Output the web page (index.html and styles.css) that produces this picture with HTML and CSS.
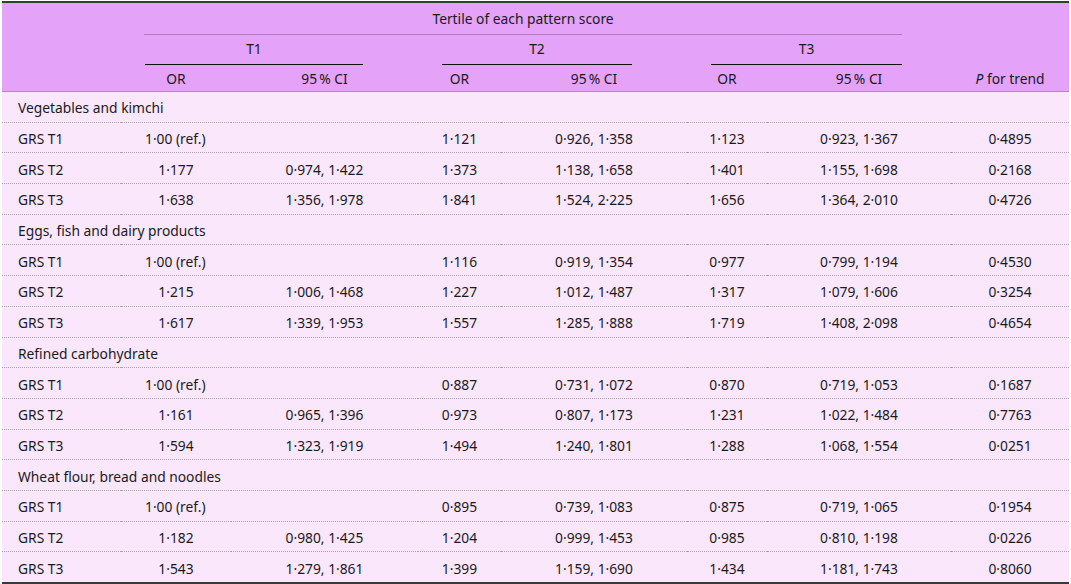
FILE: index.html
```html
<!DOCTYPE html>
<html lang="en">
<head>
<meta charset="utf-8">
<title>Tertile of each pattern score</title>
<link rel="stylesheet" href="styles.css">
</head>
<body>
<table class="grid">
  <colgroup>
    <col class="c-label"><col class="c-or1"><col class="c-ci1"><col class="c-or2"><col class="c-ci2"><col class="c-or3"><col class="c-ci3"><col class="c-p">
  </colgroup>
  <thead>
    <tr class="h1">
      <th></th>
      <th colspan="6"><div class="span span-all">Tertile of each pattern score</div></th>
      <th></th>
    </tr>
    <tr class="h2">
      <th></th>
      <th colspan="2"><div class="span span-t">T1</div></th>
      <th colspan="2"><div class="span span-t">T2</div></th>
      <th colspan="2"><div class="span span-t3">T3</div></th>
      <th></th>
    </tr>
    <tr class="h3">
      <th></th>
      <th>OR</th><th>95&#8201;% CI</th>
      <th>OR</th><th>95&#8201;% CI</th>
      <th>OR</th><th>95&#8201;% CI</th>
      <th class="p"><i>P</i> for trend</th>
    </tr>
  </thead>
  <tbody>
    <tr class="grp"><td colspan="8">Vegetables and kimchi</td></tr>
    <tr><td>GRS T1</td><td class="ref">1·00 (ref.)</td><td></td><td>1·121</td><td>0·926, 1·358</td><td>1·123</td><td>0·923, 1·367</td><td>0·4895</td></tr>
    <tr><td>GRS T2</td><td>1·177</td><td>0·974, 1·422</td><td>1·373</td><td>1·138, 1·658</td><td>1·401</td><td>1·155, 1·698</td><td>0·2168</td></tr>
    <tr><td>GRS T3</td><td>1·638</td><td>1·356, 1·978</td><td>1·841</td><td>1·524, 2·225</td><td>1·656</td><td>1·364, 2·010</td><td>0·4726</td></tr>
    <tr class="grp"><td colspan="8">Eggs, fish and dairy products</td></tr>
    <tr><td>GRS T1</td><td class="ref">1·00 (ref.)</td><td></td><td>1·116</td><td>0·919, 1·354</td><td>0·977</td><td>0·799, 1·194</td><td>0·4530</td></tr>
    <tr><td>GRS T2</td><td>1·215</td><td>1·006, 1·468</td><td>1·227</td><td>1·012, 1·487</td><td>1·317</td><td>1·079, 1·606</td><td>0·3254</td></tr>
    <tr><td>GRS T3</td><td>1·617</td><td>1·339, 1·953</td><td>1·557</td><td>1·285, 1·888</td><td>1·719</td><td>1·408, 2·098</td><td>0·4654</td></tr>
    <tr class="grp"><td colspan="8">Refined carbohydrate</td></tr>
    <tr><td>GRS T1</td><td class="ref">1·00 (ref.)</td><td></td><td>0·887</td><td>0·731, 1·072</td><td>0·870</td><td>0·719, 1·053</td><td>0·1687</td></tr>
    <tr><td>GRS T2</td><td>1·161</td><td>0·965, 1·396</td><td>0·973</td><td>0·807, 1·173</td><td>1·231</td><td>1·022, 1·484</td><td>0·7763</td></tr>
    <tr><td>GRS T3</td><td>1·594</td><td>1·323, 1·919</td><td>1·494</td><td>1·240, 1·801</td><td>1·288</td><td>1·068, 1·554</td><td>0·0251</td></tr>
    <tr class="grp"><td colspan="8">Wheat flour, bread and noodles</td></tr>
    <tr><td>GRS T1</td><td class="ref">1·00 (ref.)</td><td></td><td>0·895</td><td>0·739, 1·083</td><td>0·875</td><td>0·719, 1·065</td><td>0·1954</td></tr>
    <tr><td>GRS T2</td><td>1·182</td><td>0·980, 1·425</td><td>1·204</td><td>0·999, 1·453</td><td>0·985</td><td>0·810, 1·198</td><td>0·0226</td></tr>
    <tr class="last"><td>GRS T3</td><td>1·543</td><td>1·279, 1·861</td><td>1·399</td><td>1·159, 1·690</td><td>1·434</td><td>1·181, 1·743</td><td>0·8060</td></tr>
  </tbody>
</table>
</body>
</html>
```
FILE: styles.css
```css
html, body {
  margin: 0;
  padding: 0;
  background: #ffffff;
}
body {
  padding: 1px 2px 0 2px;
  font-family: "Noto Sans", "Open Sans", "DejaVu Sans", sans-serif;
  font-size: 13.8px;
  color: #1a1a1a;
}
.grid {
  width: 1067px;
  table-layout: fixed;
  border-collapse: collapse;
  border-top: 2px solid #3a3a3a;
  border-bottom: 2px solid #3a3a3a;
}
.c-label { width: 119px; }
.c-or1 { width: 110px; }
.c-ci1 { width: 187px; }
.c-or2 { width: 83px; }
.c-ci2 { width: 186px; }
.c-or3 { width: 80px; }
.c-ci3 { width: 184px; }
.c-p { width: 118px; }

thead { background: #e4a2f9; }
th {
  font-weight: normal;
  padding: 0;
  text-align: center;
  white-space: nowrap;
}
.h1 th { height: 32px; vertical-align: bottom; }
.h2 th { height: 30px; vertical-align: bottom; }
.h3 th { height: 26px; vertical-align: middle; border-bottom: 1px solid #b785c4; }
.span { line-height: 16px; }
.span-all {
  margin: 0 49px 0 23px;
  padding-bottom: 7px;
  border-bottom: 1px solid #b07cc0;
}
.span-t {
  margin: 0 55px 0 24px;
  padding-bottom: 7px;
  border-bottom: 1.5px solid #111;
}
.span-t3 {
  margin: 0 49px 0 24px;
  padding-bottom: 7px;
  border-bottom: 1.5px solid #111;
}

tbody { background: #fae7fc; }
td {
  height: 27.7px;
  padding: 2px 0 0 0;
  text-align: center;
  white-space: nowrap;
  border-bottom: 1px dotted #aa9fab;
}
td:first-child { text-align: left; padding-left: 16px; }
.grp td { text-align: left; padding-left: 16px; }
td.ref { text-align: left; padding-left: 24px; }
.last td { border-bottom: none; }
```
